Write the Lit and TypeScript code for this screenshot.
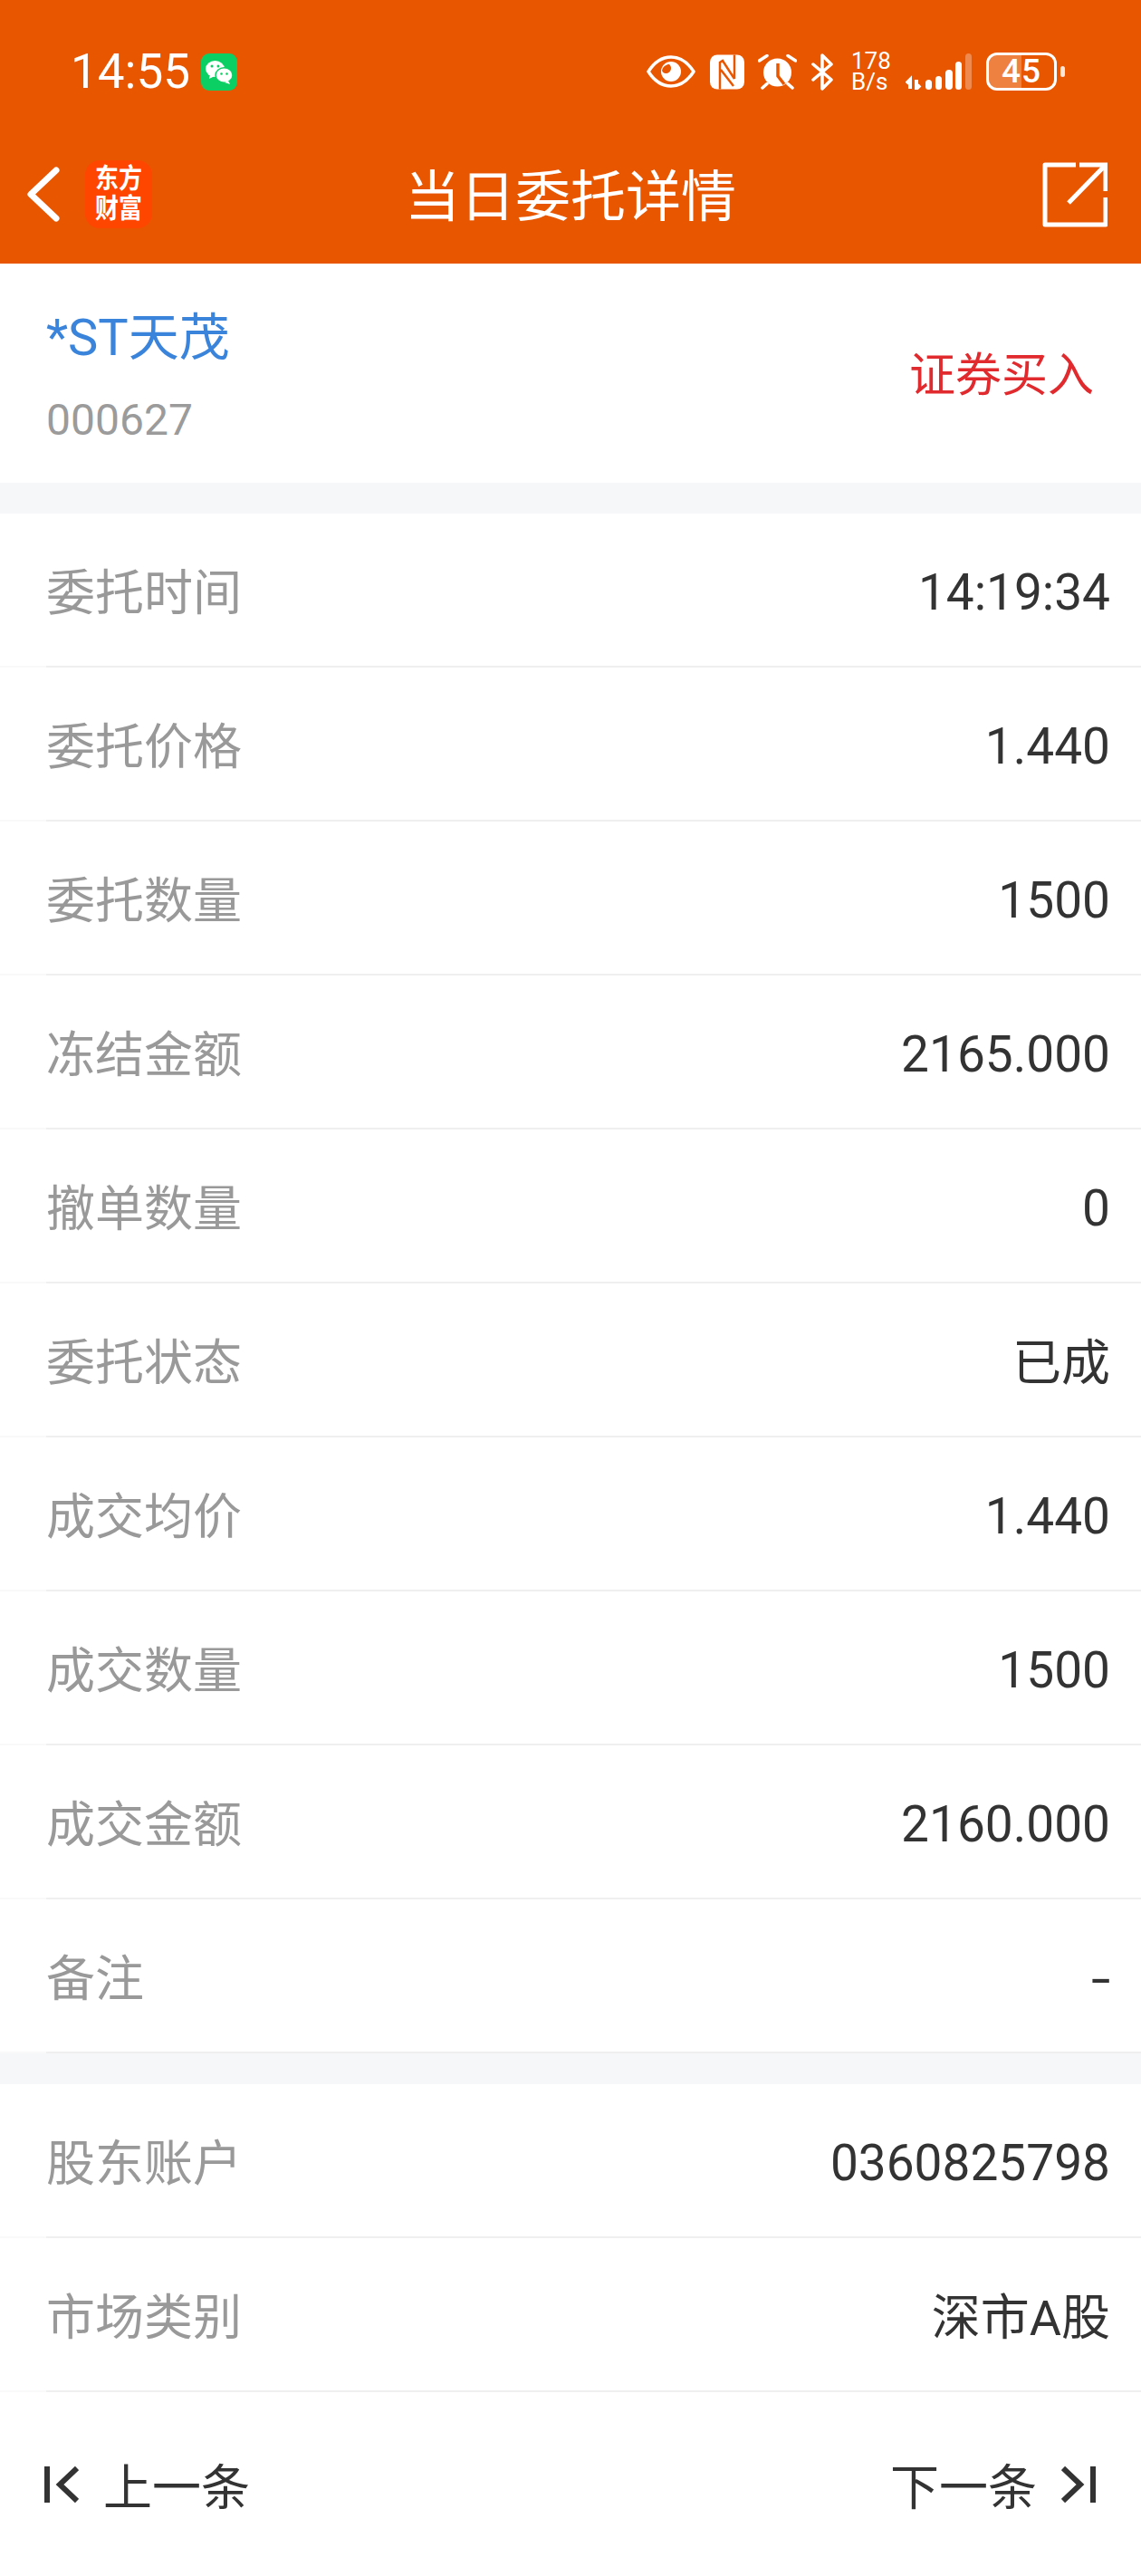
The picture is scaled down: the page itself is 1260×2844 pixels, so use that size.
import { LitElement, html, css } from "lit";
import { customElement } from "lit/decorators.js";

const firstGroup = [
  ["委托时间", "14:19:34"],
  ["委托价格", "1.440"],
  ["委托数量", "1500"],
  ["冻结金额", "2165.000"],
  ["撤单数量", "0"],
  ["委托状态", "已成"],
  ["成交均价", "1.440"],
  ["成交数量", "1500"],
  ["成交金额", "2160.000"],
  ["备注", "-"],
];

const secondGroup = [
  ["股东账户", "0360825798"],
  ["市场类别", "深市A股"],
];

@customElement("app-root")
export class AppRoot extends LitElement {
  static styles = css`
    :host {
      display: block;
      width: 1260px;
      height: 2844px;
      background: #fff;
      overflow: hidden;
      font-family: Roboto, "Noto Sans CJK SC", sans-serif;
    }

    .head {
      background: #e85600;
      height: 291px;
      color: #fff;
    }

    .status {
      display: flex;
      align-items: center;
      height: 158px;
      padding: 0 84px 0 78px;
      box-sizing: border-box;
    }

    .time {
      font-size: 53px;
      font-weight: 400;
      line-height: 1;
      margin-right: 12px;
    }

    .status svg {
      display: block;
      flex: none;
    }

    .icons {
      margin-left: auto;
      display: flex;
      align-items: center;
    }

    .speed {
      width: 44px;
      margin: 0 16px 0 19px;
      font-size: 26px;
      line-height: 23px;
      text-align: left;
      white-space: nowrap;
    }

    .battery {
      position: relative;
      width: 78px;
      height: 42px;
      box-sizing: border-box;
      border: 3px solid #fff;
      border-radius: 12px;
      margin-left: 16px;
      overflow: hidden;
    }

    .battery i {
      display: block;
      width: 36px;
      height: 100%;
      background: rgba(255, 255, 255, 0.25);
    }

    .battery b {
      position: absolute;
      left: 0;
      right: 0;
      top: 0;
      bottom: 0;
      text-align: center;
      font-size: 37px;
      line-height: 36px;
      font-weight: 500;
      letter-spacing: 1px;
    }

    .tip {
      width: 5px;
      height: 12px;
      margin-left: 4px;
      border-radius: 3px;
      background: rgba(255, 255, 255, 0.85);
    }

    .nav {
      position: relative;
      display: flex;
      align-items: center;
      height: 133px;
      padding: 0 37px 0 30px;
      margin-top: -10px;
    }

    .nav .logo {
      width: 74px;
      height: 75px;
      margin-left: 28px;
      box-sizing: border-box;
      padding-top: 4px;
      border-radius: 16px;
      background: #ff4600;
      font-size: 26px;
      font-weight: 700;
      line-height: 33px;
      text-align: center;
      white-space: nowrap;
    }

    .logo span {
      display: block;
      transform: scaleY(1.15);
    }

    .title {
      position: absolute;
      left: 0;
      right: 0;
      top: 38px;
      font-size: 61px;
      line-height: 64px;
      text-align: center;
    }

    .nav .share {
      margin-left: auto;
      display: block;
    }

    .stock {
      height: 242px;
      box-sizing: border-box;
      padding: 48px 52px 0 51px;
      display: flex;
      justify-content: space-between;
    }

    .name {
      color: #3a84dc;
      font-size: 56px;
      line-height: 68px;
    }

    .code {
      margin-top: 29px;
      color: #9b9b9b;
      font-size: 48px;
      line-height: 56px;
    }

    .side {
      margin-top: 46px;
      color: #e12a2e;
      font-size: 51px;
      line-height: 60px;
    }

    .band {
      height: 34px;
      background: #f6f7f9;
    }

    .row {
      height: 170px;
      box-sizing: border-box;
      padding: 0 34px 4px 51px;
      display: flex;
      align-items: center;
      justify-content: space-between;
      background: linear-gradient(90deg, #f9f9f9 51px, #efefef 51px) left bottom / 100% 2px no-repeat;
      font-size: 54px;
    }

    .label {
      color: #999;
    }

    .value {
      color: #333;
    }

    .value.num {
      font-size: 55px;
      padding-top: 7px;
    }

    .value.dash {
      display: inline-block;
      padding-top: 10px;
      transform: scaleX(1.4);
      transform-origin: right center;
    }

    .foot {
      display: flex;
      justify-content: space-between;
      align-items: center;
      height: 203px;
      padding: 0 50px 0 49px;
      color: #333;
      font-size: 54px;
      box-sizing: border-box;
    }

    .foot div {
      display: flex;
      align-items: center;
      gap: 27px;
    }
  `;

  renderRow(row: string[]) {
    const kind = row[1] === "-" ? "num dash" : /^[\d:.]+$/.test(row[1]) ? "num" : "";
    return html`<div class="row">
      <span class="label">${row[0]}</span><span class="value ${kind}">${row[1]}</span>
    </div>`;
  }

  render() {
    return html`
      <div class="head">
        <div class="status">
          <span class="time">14:55</span>
          <svg width="40" height="41" viewBox="0 0 40 41">
            <rect width="40" height="41" rx="9" fill="#0ccf63" />
            <ellipse cx="15.5" cy="17" rx="10.5" ry="9" fill="#fff" />
            <path d="M10 23l-1 5 6-3z" fill="#fff" />
            <ellipse cx="25.5" cy="24" rx="9.5" ry="8.2" fill="#fff" stroke="#0ccf63" stroke-width="1.5" />
            <path d="M30 30l2 4-6-2z" fill="#fff" />
            <circle cx="12" cy="14" r="1.5" fill="#0ccf63" />
            <circle cx="19" cy="14" r="1.5" fill="#0ccf63" />
            <circle cx="22.5" cy="22.5" r="1.3" fill="#0ccf63" />
            <circle cx="28.5" cy="22.5" r="1.3" fill="#0ccf63" />
          </svg>
          <div class="icons">
            <svg width="54" height="36" viewBox="0 0 54 36">
              <path d="M2 18C9 7 18 2 27 2s18 5 25 16c-7 11-16 16-25 16S9 29 2 18z" fill="none" stroke="#fff" stroke-width="3.5" stroke-linejoin="round" />
              <circle cx="27" cy="18" r="11" fill="#fff" />
              <path d="M21 20c3 0 6-2 6-6 0-2-1-3-2-4-3 0-7 2-8 7 1 2 2 3 4 3z" fill="#e85600" />
            </svg>
            <svg style="margin-left:16px" width="38" height="39" viewBox="0 0 38 39">
              <rect width="38" height="38" y="0.5" rx="8" fill="#fff" />
              <path d="M11 38.500V9l3-2 13 20M12 17l14 18M27 0.500V27" fill="none" stroke="#e85600" stroke-width="2.500" />
            </svg>
            <svg style="margin-left:15px" width="43" height="39" viewBox="0 0 43 39">
              <circle cx="21.5" cy="20" r="15.5" fill="#fff" />
              <path d="M22 10v14l7 9" fill="none" stroke="#e85600" stroke-width="3.5" />
              <path d="M1.5 7l8.500-5.500M41.500 7l-8.500-5.500M5 37l5-4.500M38 37l-5-4.500" fill="none" stroke="#fff" stroke-width="3.500" stroke-linecap="round" />
            </svg>
            <svg style="margin-left:16px" width="25" height="41" viewBox="0 0 25 41">
              <path d="M2 12l20 17-10 10V2l10 10L2 29" fill="none" stroke="#fff" stroke-width="3.500" stroke-linejoin="round" stroke-linecap="round" />
            </svg>
            <div class="speed">178<br />B/s</div>
            <svg width="73" height="40" viewBox="0 0 73 40">
              <path d="M5 39V29l-4 4M12 29v10l4-4" fill="none" stroke="#fff" stroke-width="4" />
              <rect x="22" y="29" width="7" height="11" rx="3.500" fill="#fff" />
              <rect x="33" y="25" width="7" height="15" rx="3.500" fill="#fff" />
              <rect x="44" y="18" width="8" height="22" rx="4" fill="#fff" />
              <rect x="55" y="9" width="7" height="31" rx="3.500" fill="#fff" />
              <rect x="66" y="0" width="7" height="40" rx="3.500" fill="#fff" opacity=".3" />
            </svg>
            <div class="battery"><i></i><b>45</b></div>
            <div class="tip"></div>
          </div>
        </div>
        <div class="nav">
          <svg width="36" height="61" viewBox="0 0 36 61">
            <path d="M32 4L4 30.500 32 57" fill="none" stroke="#fff" stroke-width="7" stroke-linecap="round" stroke-linejoin="round" />
          </svg>
          <div class="logo"><span>东方</span><span>财富</span></div>
          <div class="title">当日委托详情</div>
          <svg class="share" width="72" height="72" viewBox="0 0 72 72">
            <path d="M37 3H3v66h67V39" fill="none" stroke="#fff" stroke-width="5" stroke-linejoin="round" />
            <path d="M29 45L69 4M41 3h29v29" fill="none" stroke="#fff" stroke-width="5" />
          </svg>
        </div>
      </div>

      <div class="stock">
        <div>
          <div class="name">*ST天茂</div>
          <div class="code">000627</div>
        </div>
        <div class="side">证券买入</div>
      </div>
      <div class="band"></div>
      ${firstGroup.map((row) => this.renderRow(row))}
      <div class="band"></div>
      ${secondGroup.map((row) => this.renderRow(row))}
      <div class="foot">
        <div>
          <svg width="38" height="42" viewBox="0 0 38 42">
            <path d="M3 1v40" fill="none" stroke="#333" stroke-width="6" />
            <path d="M36 3L17 21l19 18" fill="none" stroke="#333" stroke-width="6" />
          </svg>
          <span>上一条</span>
        </div>
        <div>
          <span>下一条</span>
          <svg width="38" height="42" viewBox="0 0 38 42">
            <path d="M35 1v40" fill="none" stroke="#333" stroke-width="6" />
            <path d="M2 3l19 18L2 39" fill="none" stroke="#333" stroke-width="6" />
          </svg>
        </div>
      </div>
    `;
  }
}
